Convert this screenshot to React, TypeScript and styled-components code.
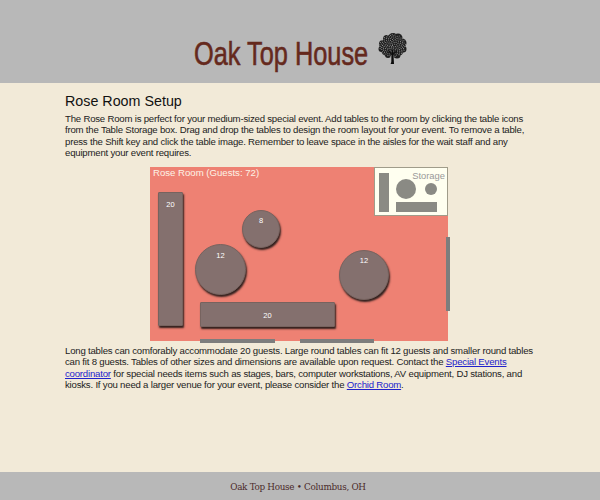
import React from "react";
import styled, { createGlobalStyle } from "styled-components";

const Global = createGlobalStyle`
  html, body { margin: 0; padding: 0; }
  body { font-family: "Liberation Sans", Arial, sans-serif; background: #f2ead8; }
`;
const Page = styled.div`
  width: 600px; height: 500px; display: flex; flex-direction: column; background: #f2ead8; overflow: hidden;
`;
const Header = styled.header`
  height: 83px; background: #b8b8b8; display: flex; align-items: flex-end; justify-content: center; gap: 10px; flex: none;
  padding: 0 0 13px; box-sizing: border-box;
`;
const Logo = styled.div`
  width: 174px; font-size: 34px; color: #65291d; line-height: 34px; white-space: nowrap;
  -webkit-text-stroke: 0.6px #65291d;
  span { display: inline-block; transform: scaleX(0.745); transform-origin: left center; }
`;
const TreeBox = styled.svg`
  width: 29px; height: 32px; flex: none; margin-bottom: 5px;
`;
const Main = styled.main`
  flex: 1; padding: 11px 65px 0; display: flex; flex-direction: column;
`;
const Title = styled.h1`
  margin: 0 0 5px; font-size: 14.3px; font-weight: 400; line-height: 14px; color: #111;
`;
const Para = styled.p`
  margin: 0; font-size: 9.6px; letter-spacing: -0.2px; line-height: 11.3px; color: #222;
  a { color: #2222cc; }
`;
const Room = styled.div`
  position: relative; width: 298px; height: 174px; background: #ee8173; margin: 9px 0 4px 85px; flex: none;
`;
const RoomLabel = styled.div`
  position: absolute; left: 3px; top: 0; font-size: 9.6px; line-height: 12px; color: #fdf3e6;
`;
const Storage = styled.div`
  position: absolute; right: 0; top: 0; width: 74px; height: 49px; background: #fffff0;
  border: 1px solid #a09c8a; box-sizing: border-box; padding: 5px 10px 3px 4px;
  display: grid; grid-template-columns: 10px 1fr; column-gap: 7px;
`;
const StorageLabel = styled.div`
  position: absolute; right: 2px; top: 2px; font-size: 9.4px; line-height: 12px; color: #999;
`;
const ThumbColumn = styled.div`
  display: flex; flex-direction: column; justify-content: flex-end; gap: 3px; min-width: 0;
`;
const ThumbRow = styled.div`
  display: flex; align-items: center; justify-content: space-between;
`;
const ThumbBar = styled.div`
  background: #8a8a84;
`;
const ThumbWide = styled(ThumbBar)`
  height: 10px;
`;
const ThumbCircle = styled.div<{ $d: number }>`
  width: ${p => p.$d}px; height: ${p => p.$d}px; border-radius: 50%; background: #8a8a84;
`;
const Table = styled.div<{ $x: number; $y: number; $w: number; $h: number; $round?: boolean; $pad: number }>`
  position: absolute; left: ${p => p.$x}px; top: ${p => p.$y}px; width: ${p => p.$w}px; height: ${p => p.$h}px;
  box-sizing: border-box; background: #84706e; border: 1px solid #77635f;
  border-radius: ${p => (p.$round ? "50%" : "1px")};
  box-shadow: 1px 2px 2px #2f1f1d;
  color: #fff; font-size: 7.5px; line-height: 9px; text-align: center; padding-top: ${p => p.$pad}px;
`;
const Wall = styled.div<{ $x: number; $y: number; $w: number; $h: number }>`
  position: absolute; left: ${p => p.$x}px; top: ${p => p.$y}px; width: ${p => p.$w}px; height: ${p => p.$h}px;
  background: #7d7d7d;
`;
const Footer = styled.footer`
  height: 28px; flex: none; background: #b8b8b8; display: flex; align-items: center; justify-content: center;
  padding-right: 4px;
  font-family: "DejaVu Serif Condensed", "DejaVu Serif", serif; font-size: 9.8px; letter-spacing: -0.3px; color: #4b2a2a;
`;

const blobs = [
  [15, 5, 5], [9, 6, 4], [20, 5, 4.5], [24, 10, 4.5], [5, 11, 4], [11, 11, 5], [19, 11, 5], [15, 9, 5],
  [3.5, 16, 3], [25, 16, 3.5], [8, 18, 4.5], [21, 18, 4.5], [15, 16, 5], [10, 22, 3], [19, 22, 3.5],
];
const specks = Array.from({ length: 130 }, (_, i) => {
  const a = i * 2.4;
  const r = Math.sqrt(i / 130) * 13.5;
  return [14.5 + Math.cos(a) * r, 12.5 + Math.sin(a) * r * 0.85];
});

const Tree = () => (
  <TreeBox viewBox="0 0 29 32">
    {blobs.map(([x, y, r], i) => <circle key={i} cx={x} cy={y} r={r} fill="#1e1e1e" />)}
    {specks.map(([x, y], i) => <circle key={i} cx={x} cy={y} r={0.55} fill="#9a9a9a" />)}
    <path d="M12.6 31h3.4l-.5-9 3.6-4-.8-.6-3 3.2-.3-4h-1l-.2 4-3-3.2-.8.6 3.4 4-.1 7z" fill="#0c0c0c" />
  </TreeBox>
);

export default function App() {
  return (
    <Page>
      <Global />
      <Header>
        <Logo><span>Oak Top House</span></Logo>
        <Tree />
      </Header>
      <Main>
        <Title>Rose Room Setup</Title>
        <Para>
          The Rose Room is perfect for your medium-sized special event. Add tables to the room by clicking the table icons
          from the Table Storage box. Drag and drop the tables to design the room layout for your event. To remove a table,
          press the Shift key and click the table image. Remember to leave space in the aisles for the wait staff and any
          equipment your event requires.
        </Para>
        <Room>
          <RoomLabel>Rose Room (Guests: 72)</RoomLabel>
          <Storage>
            <StorageLabel>Storage</StorageLabel>
            <ThumbBar />
            <ThumbColumn>
              <ThumbRow>
                <ThumbCircle $d={20} />
                <ThumbCircle $d={12} />
              </ThumbRow>
              <ThumbWide />
            </ThumbColumn>
          </Storage>
          <Table $x={8} $y={25} $w={25} $h={134} $pad={7}>20</Table>
          <Table $x={45} $y={77} $w={51} $h={51} $round $pad={6}>12</Table>
          <Table $x={92} $y={43} $w={38} $h={38} $round $pad={5}>8</Table>
          <Table $x={189} $y={83} $w={50} $h={50} $round $pad={5}>12</Table>
          <Table $x={50} $y={135} $w={135} $h={25} $pad={8}>20</Table>
          <Wall $x={50} $y={172} $w={75} $h={4} />
          <Wall $x={150} $y={172} $w={74} $h={4} />
          <Wall $x={296} $y={70} $w={4} $h={74} />
        </Room>
        <Para>
          Long tables can comforably accommodate 20 guests. Large round tables can fit 12 guests and smaller round tables
          can fit 8 guests. Tables of other sizes and dimensions are available upon request. Contact the <a href="#">Special Events coordinator</a> for special needs items such as stages, bars, computer workstations, AV equipment, DJ stations, and
          kiosks. If you need a larger venue for your event, please consider the <a href="#">Orchid Room</a>.
        </Para>
      </Main>
      <Footer>Oak Top House • Columbus, OH</Footer>
    </Page>
  );
}
